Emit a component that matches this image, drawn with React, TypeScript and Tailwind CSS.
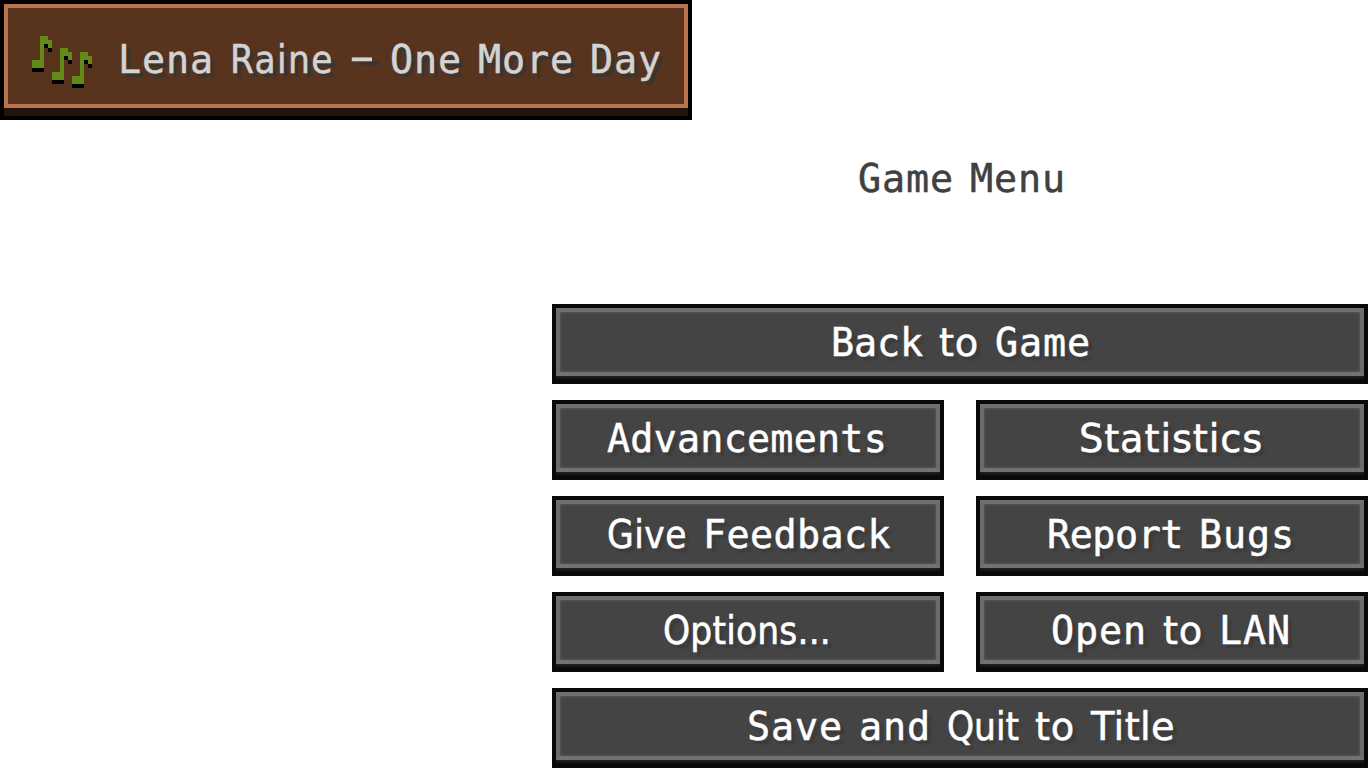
import React from 'react';
import clsx from 'clsx';

const FONT_SIZE = 38.4;

// Advance of each character in px, anything not listed is a full 24px cell
const ADVANCE: Record<string, number> = { i: 8, '.': 8, l: 12, t: 16, ' ': 16, k: 20 };

const FONTS = {
  mono: {
    family: '"DejaVu Sans Mono", monospace',
    className: "[font-family:'DejaVu_Sans_Mono',monospace]",
  },
  sans: {
    family: '"DejaVu Sans", sans-serif',
    className: "[font-family:'DejaVu_Sans',sans-serif]",
  },
  condensed: {
    family: '"DejaVu Sans Condensed", "DejaVu Sans", sans-serif',
    className: "[font-family:'DejaVu_Sans_Condensed','DejaVu_Sans',sans-serif]",
  },
};

type FontName = keyof typeof FONTS;

const ctx = document.createElement('canvas').getContext('2d')!;

const advanceOf = (text: string) =>
  [...text].reduce((sum, char) => sum + (ADVANCE[char] ?? 24), 0);

const naturalWidth = (text: string, font: FontName) => {
  ctx.font = `${FONT_SIZE}px ${FONTS[font].family}`;
  return ctx.measureText(text).width;
};

// Words made of full cells only look best in mono, the rest take the widest font that fits
const pickFont = (word: string): FontName => {
  if (word.length > 2 && !/[il.]/.test(word)) return 'mono';
  return naturalWidth(word, 'sans') <= advanceOf(word) + 1 ? 'sans' : 'condensed';
};

const Word: React.FC<{ text: string }> = ({ text }) => {
  if (text === '-') {
    return (
      <span className="inline-block w-6 text-center">
        <span className="inline-block -translate-y-[3px] scale-x-[1.9]">-</span>
      </span>
    );
  }

  const font = pickFont(text);
  const letterSpacing = (advanceOf(text) - naturalWidth(text, font)) / text.length;

  return (
    <span className={FONTS[font].className} style={{ letterSpacing }}>
      {text}
    </span>
  );
};

interface GameTextProps {
  children: string;
  className?: string;
}

// Spaces every word so it fills the same cells as the game font
const GameText: React.FC<GameTextProps> = ({ children, className }) => {
  const words = children.split(' ');

  return (
    <span
      className={clsx(
        "block whitespace-pre text-[38.4px] leading-[40px] [-webkit-text-stroke:0.5px_currentColor] [font-family:'DejaVu_Sans',sans-serif]",
        className
      )}
      style={{ paddingLeft: advanceOf(children) % 8, wordSpacing: 16 - naturalWidth(' ', 'sans') }}
    >
      {words.map((word, i) => (
        <React.Fragment key={i}>
          <Word text={word} />
          {i < words.length - 1 && ' '}
        </React.Fragment>
      ))}
    </span>
  );
};

const NOTES = [
  { x: 0, y: 0 },
  { x: 5, y: 3 },
  { x: 10, y: 4 },
];

const MusicNotes = () => (
  <svg width="60" height="52" viewBox="0 0 15 13" shapeRendering="crispEdges" className="shrink-0">
    {NOTES.map(({ x, y }) => (
      <g key={x} transform={`translate(${x} ${y})`}>
        <path fill="#648a18" d="M2 0h2v1h1v2h-1v-1h-1v6h-3v-2h2z" />
        <path fill="#000" d="M3 2h1v1h1v1h-1v-1h-1zM0 8h3v1h-3z" />
      </g>
    ))}
  </svg>
);

const MusicToast = () => (
  <div className="h-[120px] w-[692px] border-4 border-black bg-[#22140b]">
    <div className="flex h-[104px] items-start border-4 border-[#b9734e] bg-[#58341f] pl-6 pt-7">
      <MusicNotes />
      <GameText className="mt-1 ml-[26px] text-[#d3d3d3] [text-shadow:4px_4px_1px_#373532]">
        Lena Raine - One More Day
      </GameText>
    </div>
  </div>
);

interface MenuButtonProps {
  label: string;
  wide?: boolean;
}

const MenuButton: React.FC<MenuButtonProps> = ({ label, wide }) => (
  <button
    className={clsx(
      'block h-20 border-4 border-[#07090a] bg-linear-to-b from-[#202325] from-94% to-[#0b0d0e]',
      wide && 'col-span-2'
    )}
  >
    <div className="mb-1 flex h-[68px] justify-center border-4 border-x-[#686a6c] border-y-[#707173] bg-[#444444] pt-[11px] shadow-[inset_0_0_3px_#626365]">
      <GameText className="-ml-[2px] text-white [text-shadow:4px_4px_2px_#3b3b3b]">{label}</GameText>
    </div>
  </button>
);

const MENU: MenuButtonProps[] = [
  { label: 'Back to Game', wide: true },
  { label: 'Advancements' },
  { label: 'Statistics' },
  { label: 'Give Feedback' },
  { label: 'Report Bugs' },
  { label: 'Options...' },
  { label: 'Open to LAN' },
  { label: 'Save and Quit to Title', wide: true },
];

export default function App() {
  return (
    <div className="h-screen w-[1368px] overflow-hidden bg-white">
      <MusicToast />

      <main className="ml-[552px] w-[816px] pt-[39px]">
        <h1 className="flex h-[145px] justify-center pl-1 text-[#404040]">
          <GameText>Game Menu</GameText>
        </h1>

        <div className="grid grid-cols-2 gap-x-8 gap-y-4">
          {MENU.map((item) => (
            <MenuButton key={item.label} {...item} />
          ))}
        </div>
      </main>
    </div>
  );
}
